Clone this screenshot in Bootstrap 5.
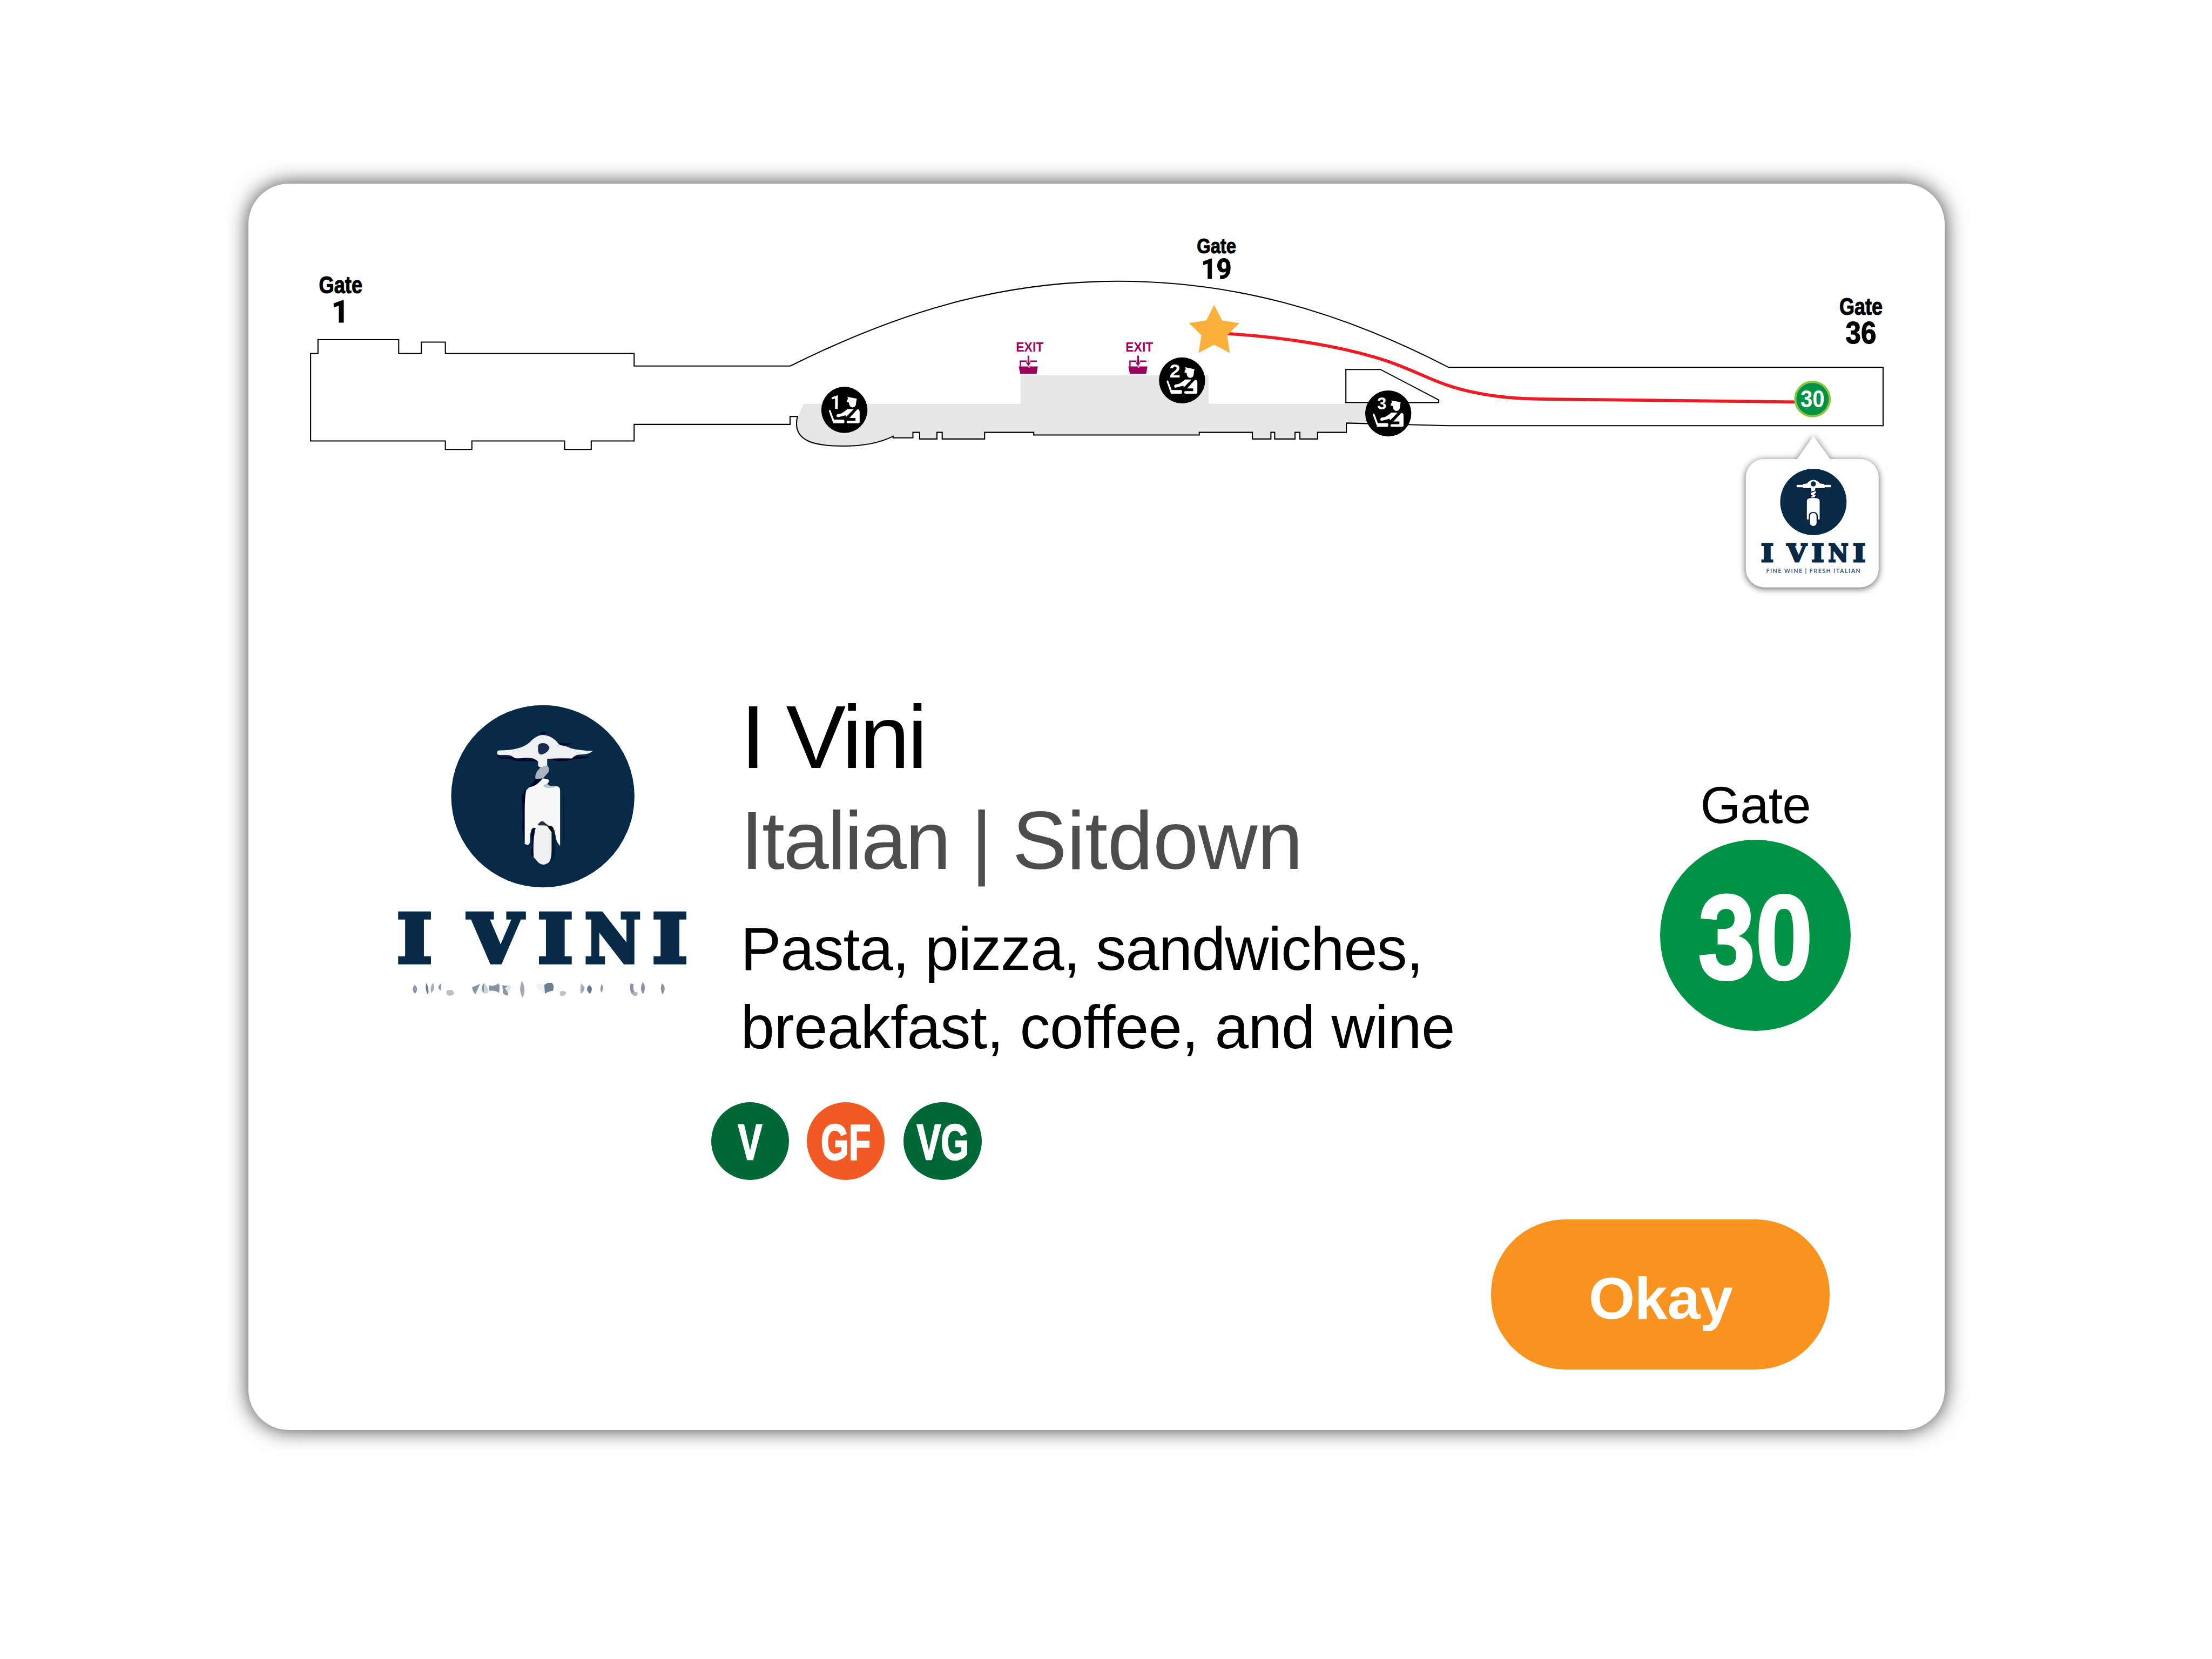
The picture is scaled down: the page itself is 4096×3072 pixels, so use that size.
<!DOCTYPE html>
<html lang="en">
<head>
<meta charset="utf-8">
<meta name="viewport" content="width=device-width, initial-scale=1">
<title>I Vini – Gate 30</title>
<link rel="stylesheet" href="https://cdn.jsdelivr.net/npm/bootstrap@5.3.0/dist/css/bootstrap.min.css">
<style>
  body { background: #fff; color: #000; font-family: "Liberation Sans", Arial, sans-serif; overflow: hidden; }
  .kiosk { width: 4096px; height: 3072px; padding: 340px 0 0 459.6px; }
  .place-card { width: 3141.2px; height: 2307.6px; border: 0; border-radius: 75px; box-shadow: 0 0 38px rgba(0,0,0,.76); }
  .terminal-map { width: 3141.2px; height: 812px; }
  .details { height: 1106px; padding: 0 173.3px 0 269.1px; }
  .brand { width: 547.7px; height: 547.7px; margin-top: 152.8px; }
  .info { margin-left: 95px; padding-top: 123.2px; }
  .place-name { font-size: 166px; line-height: 180px; letter-spacing: -4px; font-weight: 400; }
  .place-kind { font-size: 151.6px; line-height: 170px; letter-spacing: -2.5px; color: #4d4d4d; margin-top: 17.3px; }
  .place-kind span { letter-spacing: -.2px; }
  .place-menu { font-size: 112.4px; line-height: 144.9px; margin-top: 43px; }
  .place-menu .first { letter-spacing: -1.2px; }
  .place-menu .second { letter-spacing: -.7px; }
  .diets { margin: 65.4px 0 0 -54.4px; gap: 32.8px; }
  .diet { width: 144.2px; height: 144.2px; font-size: 92.5px; line-height: 1; color: #fff; font-weight: 700; padding-top: 4px; }
  .diet span { transform: scaleX(.72); -webkit-text-stroke: 2.6px #fff; }
  .diet:last-child { margin-left: 2.5px; }
  .veg { background: #006837; }
  .gluten { background: #f15a24; }
  .gate-col { width: 353.7px; padding-top: 284.2px; }
  .gate-word { font-size: 96px; line-height: 110px; letter-spacing: -1px; }
  .gate-disc { width: 353.7px; height: 353.7px; margin-top: 8.8px; background: #009245; color: #fff; font-weight: 700; font-size: 222px; line-height: 1; padding-top: 8px; }
  .gate-disc span { transform: scaleX(.86); -webkit-text-stroke: 4px #fff; }
  .btn-okay, .btn-okay:hover { width: 626.6px; height: 278.2px; margin-right: 213px; border: 0; border-radius: 137px; background: #f7931e; color: #fff; font-weight: 700; font-size: 110px; letter-spacing: -.6px; line-height: 1; padding: 14px 0 0 1px; }
  svg text { font-family: "Liberation Sans", Arial, sans-serif; }
  svg .one { font-family: Roboto, sans-serif; }
  svg .didone text { font-family: "DejaVu Serif", serif; font-weight: 700; text-anchor: middle; }
</style>
<script src="https://cdn.jsdelivr.net/npm/bootstrap@5.3.0/dist/js/bootstrap.bundle.min.js"></script>
</head>
<body>
<main class="kiosk">
  <section class="card place-card">
    <svg class="terminal-map d-block" viewBox="638.3 472.3 4362.8 1127.7" role="img" aria-label="Terminal map">
      <defs>
        <filter id="lift" x="-20%" y="-20%" width="140%" height="140%">
          <feDropShadow dx="0" dy="3" stdDeviation="9" flood-color="#000" flood-opacity=".68"/>
        </filter>
        <g id="officer">
          <circle r="59.3" fill="#000"/>
          <g transform="scale(.33333) translate(-213 -208)" fill="#fff">
            <path d="M236 107 L309 121 Q304 140 303 160 C301 198 254 198 250 162 L247 150 L228 145 L237 138 L232 133 L242 123 Z"/>
            <path d="M93 214 Q97 205 106 211 L133 283 H205 Q213 284 213 292 V302 Q213 311 205 311 H127 Z"/>
            <path d="M237 201 H286 L228 261 L222 249 L166 264 Q151 264 152 250 Q153 243 162 240 L187 236 L210 222 Z"/>
            <path d="M310 207 Q316 202 322 204 Q331 212 331 222 V302 Q330 311 321 311 H240 Q230 311 230 302 Q230 291 240 291 H299 V270 H252 Z"/>
          </g>
        </g>
        <g id="exit" fill="#9e005d">
          <text x="2612.3" y="903.7" font-size="32.5" font-weight="700" textLength="71" lengthAdjust="spacingAndGlyphs">EXIT</text>
          <g transform="translate(2600 860) scale(.33333)">
            <path d="M66 201 H121 V213 H76 V247 H66 Z M146 201 H198 V213 H146 Z"/>
            <path d="M127 164 H140 V217 H152 L133 245 L113 217 H127 Z"/>
            <path d="M58 247 H206 L196 305 H70 Z"/>
            <path d="M127 247 L133 252 L139 247 Z M138 251 a4 4 0 1 1 -.1 0 Z" fill="#fff"/>
          </g>
        </g>
      </defs>

      <!-- restricted area -->
      <path fill="#e6e6e6" d="M2066 1038.7 H2624 V965.1 H3107.8 V1038.7 H3540 V1089 L3462 1088 V1112 H3388 V1129 H3342.5 V1112 H3330 V1129 H3277.7 V1112 H3268 V1129 H3220.3 V1112 H3083.7 V1118.8 H2658 V1112 H2531.7 V1129 H2422.6 V1112 H2409 V1129 H2364.6 V1112 H2347.3 V1126 H2296.3 V1122 C2262 1139 2215 1147.3 2168 1147.3 C2085 1147.3 2048 1130 2048 1090 Q2048 1080 2052 1071 Z"/>

      <!-- terminal outline -->
      <g fill="none" stroke="#000" stroke-width="2.9">
        <path d="M2052 1071 H2031.3 V1091.5 H1630.3 V1134 H1520 V1156 H1451.4 V1134 H1213 V1156 H1144.8 V1134 H798.2 V909 H817.2 V873.7 H1024.8 V909 H1083 V880 H1144.8 V909 H1630.3 V941.4 H2031.7 C2312 802 2573 723.4 2873 723.4 C3165 723.4 3435 795 3724.8 944.6 H4842.4 V1094.9 H3724.8 L3462 1088 V1112 H3388 V1129 H3342.5 V1112 H3330 V1129 H3277.7 V1112 H3268 V1129 H3220.3 V1112 H3083.7 V1118.8 H2658 V1112 H2531.7 V1129 H2422.6 V1112 H2409 V1129 H2364.6 V1112 H2347.3 V1126 H2296.3 V1122 C2262 1139 2215 1147.3 2168 1147.3 C2085 1147.3 2048 1130 2048 1090 Q2048 1080 2050.5 1071"/>
        <path fill="#fff" d="M3460.8 950.3 H3549.8 L3699.6 1028.6 V1035.3 H3460.8 Z"/>
      </g>

      <path d="M3140 857 C3290 866 3470 890 3600 941 C3670 968 3710 994 3800 1011 C3870 1025 3930 1026 3985 1026.5 L4620 1034" fill="none" stroke="#ed1c24" stroke-width="8"/>
      <path fill="#fbb03b" d="M3122 784.2 L3142.2 824 L3187 831 L3155.4 862.5 L3162.3 907.6 L3122 886.6 L3082 907.6 L3089.4 862.5 L3057.3 831 L3102 824 Z"/>

      <use href="#exit"/>
      <use href="#exit" x="281.9"/>

      <use href="#officer" x="2171" y="1054.3"/>
      <use href="#officer" x="3039.5" y="978.3"/>
      <use href="#officer" x="3569.8" y="1063.4"/>
      <g fill="#fff" font-weight="700">
        <text class="one" x="2135" y="1051" font-size="49">1</text>
        <text x="3007" y="971" font-size="49.5" textLength="28" lengthAdjust="spacingAndGlyphs">2</text>
        <text x="3541.5" y="1052.6" font-size="42.5">3</text>
      </g>

      <g font-weight="700" stroke="#000" stroke-width="1.6">
        <text x="819.5" y="754" font-size="60.5" textLength="112" lengthAdjust="spacingAndGlyphs">Gate</text>
        <text class="one" x="852" y="828.8" font-size="79">1</text>
        <text x="3077.5" y="651" font-size="55" textLength="101" lengthAdjust="spacingAndGlyphs">Gate</text>
        <text class="one" x="3089" y="717" font-size="71.5" textLength="78" lengthAdjust="spacingAndGlyphs">19</text>
        <text x="4730" y="810" font-size="60.5" textLength="111" lengthAdjust="spacingAndGlyphs">Gate</text>
        <text x="4746" y="883.4" font-size="79" textLength="79" lengthAdjust="spacingAndGlyphs">36</text>
      </g>

      <circle cx="4660.9" cy="1026.3" r="44.3" fill="#009245" stroke="#8cc63f" stroke-width="5.6"/>
      <text x="4629.9" y="1046.7" font-size="62.5" font-weight="700" fill="#fff" textLength="62" lengthAdjust="spacingAndGlyphs">30</text>

      <!-- restaurant callout -->
      <path filter="url(#lift)" fill="#fff" d="M4663.3 1121.7 L4706 1180.7 H4783.7 A47 47 0 0 1 4830.7 1227.7 V1463.3 A47 47 0 0 1 4783.7 1510.3 H4536.7 A47 47 0 0 1 4489.7 1463.3 V1227.7 A47 47 0 0 1 4536.7 1180.7 H4621.7 Z"/>
      <g transform="translate(4440 1100) scale(.33333)">
        <circle cx="669.5" cy="573" r="256" fill="#092a46"/>
        <g fill="#fff" stroke="#001236" stroke-width="8" paint-order="stroke">
          <path d="M540 441 H588 V434 L620 430 Q640 402 670 402 Q700 402 720 430 L754 434 V441 H803 V459 H757 V466 H684 V484 L652 492 V466 H588 V459 H540 Z"/>
          <path d="M650 503 L688 489 V502 L675 516 L688 523 L671 545 L652 543 V532 L666 524 L650 520 Z"/>
          <path d="M619 708 V565 Q620 545 650 543 H690 Q718 547 718 565 V708 H704 V680 Q700 650 669 650 Q637 650 634 680 V708 Z"/>
          <rect x="643" y="657" width="51" height="102" rx="25"/>
        </g>
        <circle cx="669" cy="434" r="20" fill="#092a46"/>
        <g class="didone" font-size="186" fill="#092a46" stroke="#092a46" stroke-width="12">
          <text transform="translate(313 1034) scale(1.12 1)">I</text>
          <text transform="translate(541 1034) scale(1.06 1)">V</text>
          <text transform="translate(703 1034) scale(1.12 1)">I</text>
          <text transform="translate(862 1034) scale(.91 1)">N</text>
          <text transform="translate(1023 1034) scale(1.12 1)">I</text>
        </g>
        <text x="305" y="1123" font-size="45" textLength="727" style="font-family:Lato,sans-serif" font-weight="700" fill="#4b6079">FINE WINE | FRESH ITALIAN</text>
      </g>
    </svg>

    <div class="details d-flex align-items-start">
      <svg class="brand flex-shrink-0" viewBox="60 60 1420 1420" role="img" aria-label="I Vini logo">
        <ellipse cx="776" cy="499.500" rx="440" ry="437.500" fill="#092a46"/>
        <g fill="#00032b">
          <path d="M761 196 Q776 185 793 192 L790 199 Q776 204 761 196 Z"/>
          <path d="M855 245 Q885 247 913 245 Q905 257 858 254 Z"/>
          <path d="M556 305 Q580 315 625 308 L650 318 Q720 310 752 331 L644 330 Q625 318 585 320 Q560 316 556 305 Z"/>
          <path d="M815 318 L918 315 L940 308 L1004 309 Q980 318 925 321 Q890 332 850 330 Q825 328 815 318 Z"/>
          <path d="M742 417 L776 414 Q760 445 725 455 L706 460 Q725 435 742 417 Z"/>
          <path d="M697 470 Q670 480 675 515 Q682 620 677 640 Q680 700 690 725 L700 600 Z"/>
          <path d="M873 495 L879 490 V712 L874 718 Z" fill="#001a36"/>
        </g>
        <path fill="#eff0f2" d="M556 290 Q556 279 570 279 Q620 279 652 270 Q690 261 713 240 Q745 205 776 205 Q812 206 842 236 Q855 255 868 256 Q885 257 910 269 Q950 280 1016 282 Q1000 296 975 298 L945 300 Q930 303 915 318 Q850 316 797 320 L797 353 L765 361 Q753 358 753 350 L753 333 Q735 313 700 314 Q665 318 643 317 L630 308 Q618 300 598 301 H567 Q556 300 556 290 Z"/>
        <path fill="#142d50" d="M753 260 Q754 244 776 244 Q800 244 808 266 Q802 290 772 299 Q752 300 753 275 Z"/>
        <path fill="#aab3c0" d="M765 361 L798 352 Q810 365 804 383 L780 410 Q783 415 741 415 Q734 390 765 361 Z"/>
        <path fill="#f7f9f9" d="M776 413 L800 418 Q812 425 797 440 Q800 448 815 450 L848 452 Q859 457 859 470 V738 Q843 722 839 700 Q836 672 825 660 L790 630 L742 651 Q722 651 721 662 Q713 680 716 708 Q714 737 698 732 L689 728 V560 Q690 490 697 470 L710 457 Q745 452 776 413 Z"/>
        <path fill="#b8c4cc" d="M797 438 L778 446 Q785 466 835 457 L834 450 Q800 452 797 438 Z"/>
        <path fill="#00032b" d="M742 651 Q724 648 721 664 Q719 700 728 740 Q715 765 722 784 L735 794 Z"/>
        <path fill="#000b0d" d="M792 641 Q832 636 829 668 L818 676 Z"/>
        <path fill="#001a36" d="M818 672 L831 660 Q838 690 833 730 Q848 790 807 818 Z"/>
        <path fill="#282f42" d="M751 637 Q775 600 796 642 Q775 648 751 637 Z"/>
        <path fill="#eff0f2" d="M742 650 Q751 634 796 641 L818 672 L818 760 Q818 800 806 816 Q779 838 755 818 L732 792 Q727 700 742 650 Z"/>

        <g class="didone" font-size="322" fill="#092a46" stroke="#092a46" stroke-width="20">
          <text transform="translate(160 1297) scale(1.12 1)">I</text>
          <text transform="translate(548 1297) scale(1.05 1)">V</text>
          <text transform="translate(836 1297) scale(1.12 1)">I</text>
          <text transform="translate(1112 1297) scale(.91 1)">N</text>
          <text transform="translate(1386 1297) scale(1.12 1)">I</text>
        </g>

        <!-- weathered tagline marks -->
        <g fill="#8795a5">
          <path d="M162 1405 Q182 1425 162 1448 Q142 1425 162 1405 Z"/>
          <path fill="#66798a" d="M216 1396 Q232 1420 225 1454 Q209 1430 216 1396 Z"/>
          <path fill="#a5b1bd" d="M247 1396 Q267 1420 240 1444 Q232 1420 247 1396 Z"/>
          <path d="M288 1398 L286 1432 Q262 1418 288 1398 Z"/>
          <path fill="#b5c0ca" d="M315 1432 Q345 1422 349 1445 Q347 1458 325 1457 Q308 1450 315 1432 Z"/>
          <path d="M436 1417 L475 1400 L453 1449 Q440 1440 436 1417 Z"/>
          <path d="M494 1396 V1446 Q471 1424 494 1396 Z"/>
          <path fill="#ccd3dd" d="M494 1396 Q510 1405 515 1435 Q515 1448 496 1447 Z"/>
          <path d="M520 1407 Q545 1413 562 1397 L569 1408 L567 1444 Q545 1430 520 1434 Q513 1422 520 1407 Z"/>
          <path fill="#dfe4e9" d="M598 1408 Q620 1402 623 1416 L609 1456 Z"/>
          <path d="M582 1405 Q598 1412 607 1408 L595 1422 Q610 1438 608 1457 Q582 1452 584 1435 Z"/>
          <path fill="#9eabb7" d="M676 1385 Q698 1430 679 1467 Q657 1430 676 1385 Z"/>
          <path fill="#f0f3f5" d="M744 1410 Q748 1392 783 1403 V1447 Q744 1420 744 1410 Z"/>
          <path fill="#6c7f92" d="M783 1406 Q795 1392 820 1395 Q834 1410 824 1434 Q806 1434 786 1447 Z"/>
          <path fill="#b9c3cd" d="M860 1436 Q880 1430 888 1441 Q886 1458 865 1459 Q854 1455 860 1436 Z"/>
          <path fill="#a0acb9" d="M960 1399 L977 1417 Q974 1440 958 1447 Q954 1425 960 1399 Z"/>
          <path fill="#64798b" d="M999 1406 Q1022 1420 1002 1448 Q976 1425 999 1406 Z"/>
          <path d="M1060 1401 Q1070 1422 1058 1442 Q1046 1425 1060 1401 Z"/>
          <path d="M1197 1398 L1212 1402 Q1208 1430 1216 1438 L1208 1451 Q1190 1440 1197 1398 Z"/>
          <path fill="#a8b4c0" d="M1212 1438 L1231 1441 Q1232 1458 1217 1459 Q1204 1455 1207 1446 Z"/>
          <path d="M1256 1391 Q1276 1420 1257 1449 Q1238 1425 1256 1391 Z"/>
          <path d="M1348 1397 Q1372 1417 1351 1451 Q1336 1425 1348 1397 Z"/>
        </g>
      </svg>

      <div class="info">
        <h1 class="place-name m-0 text-nowrap">I Vini</h1>
        <div class="place-kind text-nowrap">Italian | <span>Sitdown</span></div>
        <div class="place-menu text-nowrap">
          <div class="first">Pasta, pizza, sandwiches,</div>
          <div class="second">breakfast, coffee, and wine</div>
        </div>
        <div class="diets d-flex">
          <div class="diet veg rounded-circle d-flex align-items-center justify-content-center"><span>V</span></div>
          <div class="diet gluten rounded-circle d-flex align-items-center justify-content-center"><span>GF</span></div>
          <div class="diet veg rounded-circle d-flex align-items-center justify-content-center"><span>VG</span></div>
        </div>
      </div>

      <div class="gate-col ms-auto text-center">
        <div class="gate-word">Gate</div>
        <div class="gate-disc rounded-circle d-flex align-items-center justify-content-center"><span>30</span></div>
      </div>
    </div>

    <div class="d-flex justify-content-end">
      <button type="button" class="btn btn-okay">Okay</button>
    </div>
  </section>
</main>
</body>
</html>
